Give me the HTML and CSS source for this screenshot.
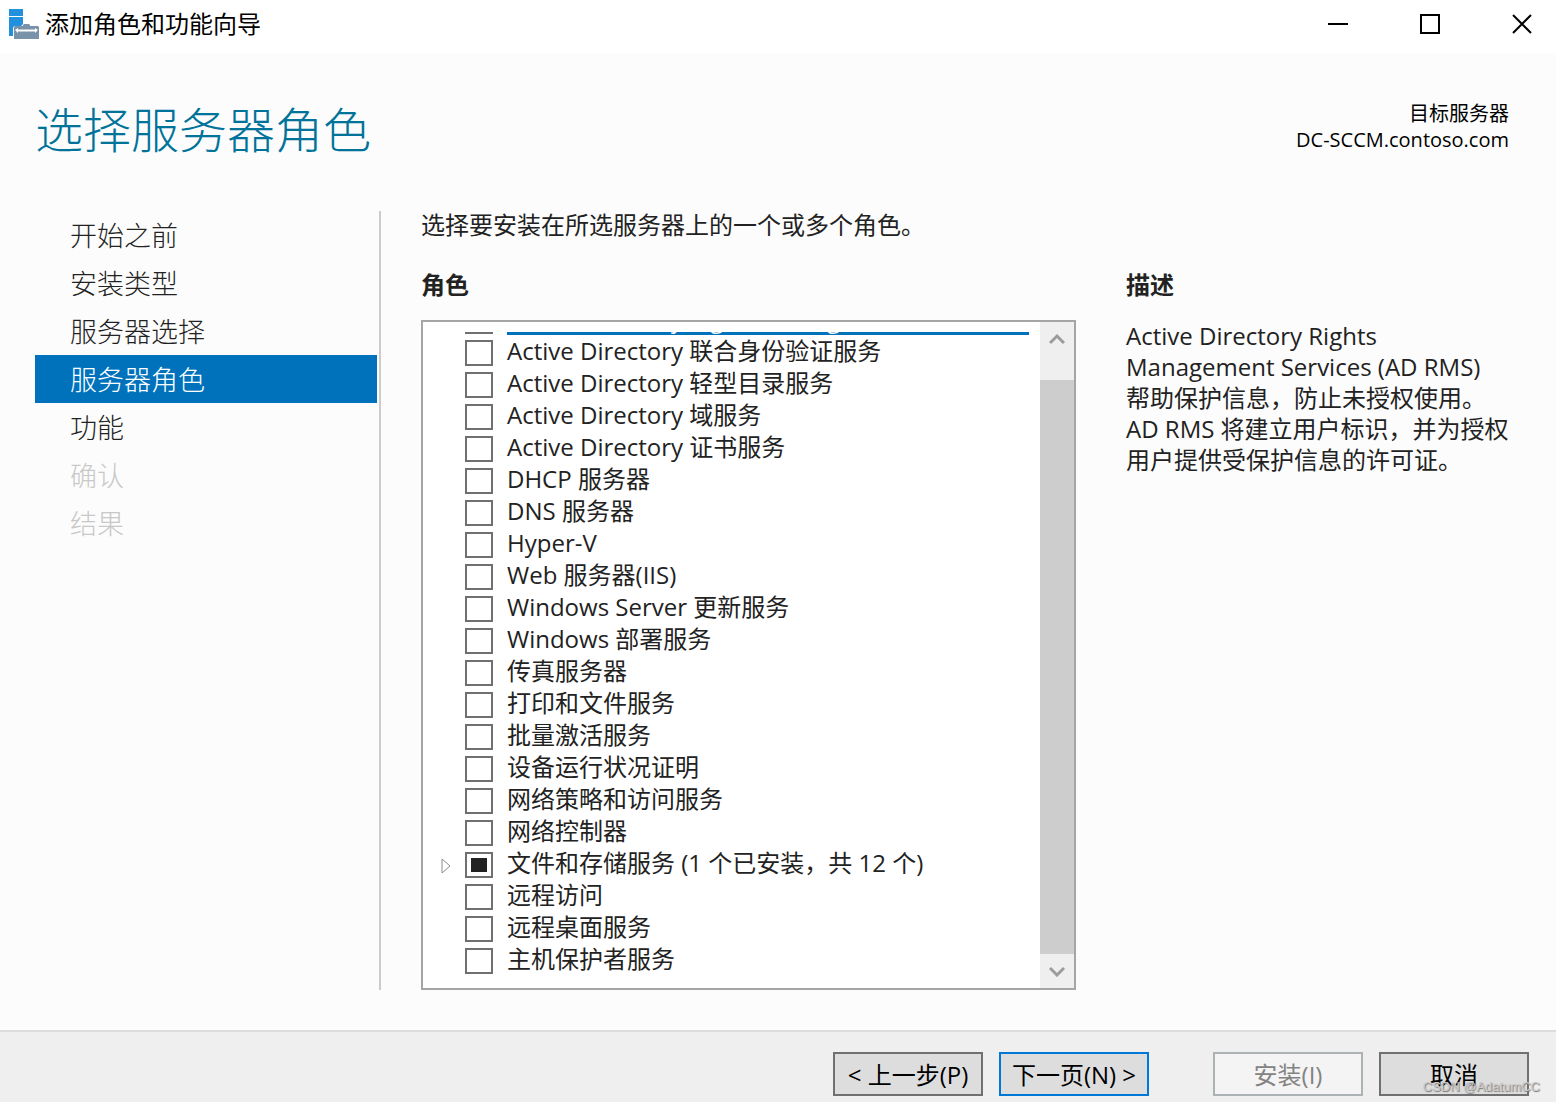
FILE: index.html
```html
<!DOCTYPE html>
<html lang="zh-CN">

<head>
    <meta charset="UTF-8">
    <meta name="viewport" content="width=device-width, initial-scale=1.0">
    <title>添加角色和功能向导</title>
    <link rel="stylesheet" href="styles.css">
</head>

<body>

    <div class="title-bar">
        <svg class="app-icon" width="30" height="30" viewBox="0 0 30 30">
            <path fill="#2290dc" d="M0 0h14v7H0zM0 8h14v7l-2 2H5l-1 2v8H0z" />
            <path fill="#7893a9" d="M14 16l1-1h5l1 1v1h8l1 1v12H5V18l1-1h8z" />
            <path fill="#fff" d="M6 21l3-2v1.500h17V19l3 2-3 3v-1.500H9V24z" />
        </svg>
        <span class="window-title">添加角色和功能向导</span>
        <div class="window-buttons">
            <button type="button" aria-label="最小化">
                <svg width="20" height="20" viewBox="0 0 20 20"><path d="M0 10h20" /></svg>
            </button>
            <button type="button" aria-label="最大化">
                <svg width="20" height="20" viewBox="0 0 20 20"><path d="M1 1h18v18H1z" /></svg>
            </button>
            <button type="button" aria-label="关闭">
                <svg width="20" height="20" viewBox="0 0 20 20"><path d="M1 1l18 18M19 1L1 19" /></svg>
            </button>
        </div>
    </div>

    <header class="header">
        <h1>选择服务器角色</h1>
        <p class="target">目标服务器<br>DC-SCCM.contoso.com</p>
    </header>

    <main class="main">
        <nav class="steps">
            <a href="#">开始之前</a>
            <a href="#">安装类型</a>
            <a href="#">服务器选择</a>
            <a href="#" class="active" aria-current="step">服务器角色</a>
            <a href="#">功能</a>
            <a class="disabled">确认</a>
            <a class="disabled">结果</a>
        </nav>

        <div class="content">
            <p class="intro">选择要安装在所选服务器上的一个或多个角色。</p>

            <section class="roles">
                <h2>角色</h2>
                <div class="role-box">
                    <div class="role-list">
                        <div class="cut-row">
                            <label class="role selected"><input type="checkbox"><span>Active Directory Rights Management Services</span></label>
                        </div>
                        <label class="role"><input type="checkbox"><span>Active Directory 联合身份验证服务</span></label>
                        <label class="role"><input type="checkbox"><span>Active Directory 轻型目录服务</span></label>
                        <label class="role"><input type="checkbox"><span>Active Directory 域服务</span></label>
                        <label class="role"><input type="checkbox"><span>Active Directory 证书服务</span></label>
                        <label class="role"><input type="checkbox"><span>DHCP 服务器</span></label>
                        <label class="role"><input type="checkbox"><span>DNS 服务器</span></label>
                        <label class="role"><input type="checkbox"><span>Hyper-V</span></label>
                        <label class="role"><input type="checkbox"><span>Web 服务器(IIS)</span></label>
                        <label class="role"><input type="checkbox"><span>Windows Server 更新服务</span></label>
                        <label class="role"><input type="checkbox"><span>Windows 部署服务</span></label>
                        <label class="role"><input type="checkbox"><span>传真服务器</span></label>
                        <label class="role"><input type="checkbox"><span>打印和文件服务</span></label>
                        <label class="role"><input type="checkbox"><span>批量激活服务</span></label>
                        <label class="role"><input type="checkbox"><span>设备运行状况证明</span></label>
                        <label class="role"><input type="checkbox"><span>网络策略和访问服务</span></label>
                        <label class="role"><input type="checkbox"><span>网络控制器</span></label>
                        <label class="role partial">
                            <svg class="expander" width="10" height="18" viewBox="0 0 10 18"><path d="M1 2v14l8-7z" /></svg>
                            <input type="checkbox"><span>文件和存储服务 (1 个已安装，共 12 个)</span>
                        </label>
                        <label class="role"><input type="checkbox"><span>远程访问</span></label>
                        <label class="role"><input type="checkbox"><span>远程桌面服务</span></label>
                        <label class="role"><input type="checkbox"><span>主机保护者服务</span></label>
                    </div>
                    <div class="scrollbar">
                        <button type="button" aria-label="向上滚动">
                            <svg width="16" height="12" viewBox="0 0 16 12"><path d="M1 10l7-7 7 7" /></svg>
                        </button>
                        <div class="track"><div class="thumb"></div></div>
                        <button type="button" aria-label="向下滚动">
                            <svg width="16" height="12" viewBox="0 0 16 12"><path d="M1 3l7 7 7-7" /></svg>
                        </button>
                    </div>
                </div>
            </section>

            <section class="description">
                <h2>描述</h2>
                <p>Active Directory Rights<br>Management Services (AD RMS)<br>帮助保护信息，防止未授权使用。<br>AD RMS 将建立用户标识，并为授权用户提供受保护信息的许可证。</p>
            </section>
        </div>
    </main>

    <footer class="footer">
        <button type="button">&lt; 上一步(P)</button>
        <button type="button" class="default">下一页(N) &gt;</button>
        <button type="button" class="install" disabled>安装(I)</button>
        <button type="button">取消</button>
        <span class="watermark">CSDN @AdatumCC</span>
    </footer>

</body>

</html>
```
FILE: styles.css
```css
* {
    box-sizing: border-box;
}

body {
    margin: 0;
    min-height: 100vh;
    display: flex;
    flex-direction: column;
    background-color: #fcfcfc;
    color: #222;
    font-family: "Open Sans", "Noto Sans CJK SC", sans-serif;
    font-size: 24px;
    line-height: 32px;
}

h1, h2, p {
    margin: 0;
}

button {
    font-family: inherit;
    font-size: inherit;
    padding: 0;
    border: none;
    background: none;
}

.title-bar {
    display: flex;
    align-items: center;
    height: 53px;
    padding: 0 0 5px 9px;
    background-color: #fff;
    color: #000;
}

.window-title {
    margin-left: 6px;
}

.window-buttons {
    display: flex;
    gap: 24px;
    margin-left: auto;
}

.window-buttons button {
    width: 68px;
    height: 48px;
}

.window-buttons svg {
    display: block;
    margin: 0 auto;
    fill: none;
    stroke: #000;
    stroke-width: 2;
}

.header {
    display: flex;
    justify-content: space-between;
    padding: 48px 47px 0 35px;
    height: 158px;
}

h1 {
    color: #00739a;
    font-size: 48px;
    font-weight: 300;
    line-height: 58px;
}

.target {
    color: #000;
    font-size: 20px;
    line-height: 26px;
    text-align: right;
}

.main {
    flex: 1;
    display: flex;
    padding: 0 35px 40px;
}

.steps {
    width: 346px;
    padding-right: 2px;
    border-right: 2px solid #ccc;
}

.steps a {
    display: block;
    height: 48px;
    padding-left: 35px;
    color: #222;
    font-size: 27px;
    font-weight: 300;
    line-height: 50px;
    text-decoration: none;
}

.steps .active {
    background-color: #0072bc;
    color: #fff;
}

.steps .disabled {
    color: #c8c8c8;
}

.content {
    flex: 1;
    display: grid;
    grid-template-columns: 655fr 395fr;
    grid-template-rows: 59px 1fr;
    column-gap: 50px;
    margin-left: 40px;
}

.intro {
    grid-column: 1 / 3;
    line-height: 28px;
}

h2 {
    height: 50px;
    font-size: 24px;
    font-weight: 700;
    line-height: 30px;
}

.roles {
    display: flex;
    flex-direction: column;
}

.role-box {
    flex: 1;
    display: flex;
    border: 2px solid #a5a5a5;
    background-color: #fff;
}

.role-list {
    flex: 1;
    padding: 10px 11px 0 42px;
}

/* row scrolled almost out of view */
.cut-row {
    display: flex;
    align-items: flex-end;
    height: 3px;
    overflow: hidden;
}

.role {
    display: flex;
    width: 100%;
    height: 32px;
    position: relative;
}

.role input {
    appearance: none;
    width: 28px;
    height: 26px;
    margin: 5px 14px 0 0;
    border: 2px solid #707070;
    background-color: #fff;
}

.role span {
    flex: 1;
    white-space: nowrap;
}

.role.selected span {
    background-color: #0072bc;
    color: #fff;
}

.role.partial input {
    padding: 4px;
    background-color: #222;
    background-clip: content-box;
}

.expander {
    position: absolute;
    left: -24px;
    top: 10px;
    fill: none;
    stroke: #8c8c8c;
}

.scrollbar {
    display: flex;
    flex-direction: column;
    width: 34px;
    background-color: #efefef;
}

.scrollbar button {
    height: 34px;
}

.scrollbar svg {
    display: block;
    margin: 0 auto;
    fill: none;
    stroke: #9c9c9c;
    stroke-width: 3;
}

.track {
    flex: 1;
    display: flex;
    align-items: flex-end;
}

.thumb {
    width: 100%;
    height: 96%;
    background-color: #cdcdcd;
}

.description p {
    line-height: 31px;
}

.footer {
    position: relative;
    display: flex;
    justify-content: flex-end;
    gap: 16px;
    padding: 20px 27px 6px;
    border-top: 2px solid #dcdcdc;
    background-color: #efefef;
}

.footer button {
    width: 150px;
    height: 44px;
    padding-bottom: 2px;
    border: 2px solid #707070;
    background-color: #ddd;
    color: #000;
    white-space: nowrap;
}

.footer .default {
    border-color: #0078d7;
}

.footer .install {
    margin-left: 48px;
    border-color: #adb2b5;
    background-color: #f4f4f4;
    color: #838383;
}

.watermark {
    position: absolute;
    right: 16px;
    bottom: 7px;
    color: #c8c8c8;
    font-family: "Liberation Sans", sans-serif;
    font-size: 13px;
    line-height: 16px;
    text-shadow: 1px 1px 1px #777;
}
```
